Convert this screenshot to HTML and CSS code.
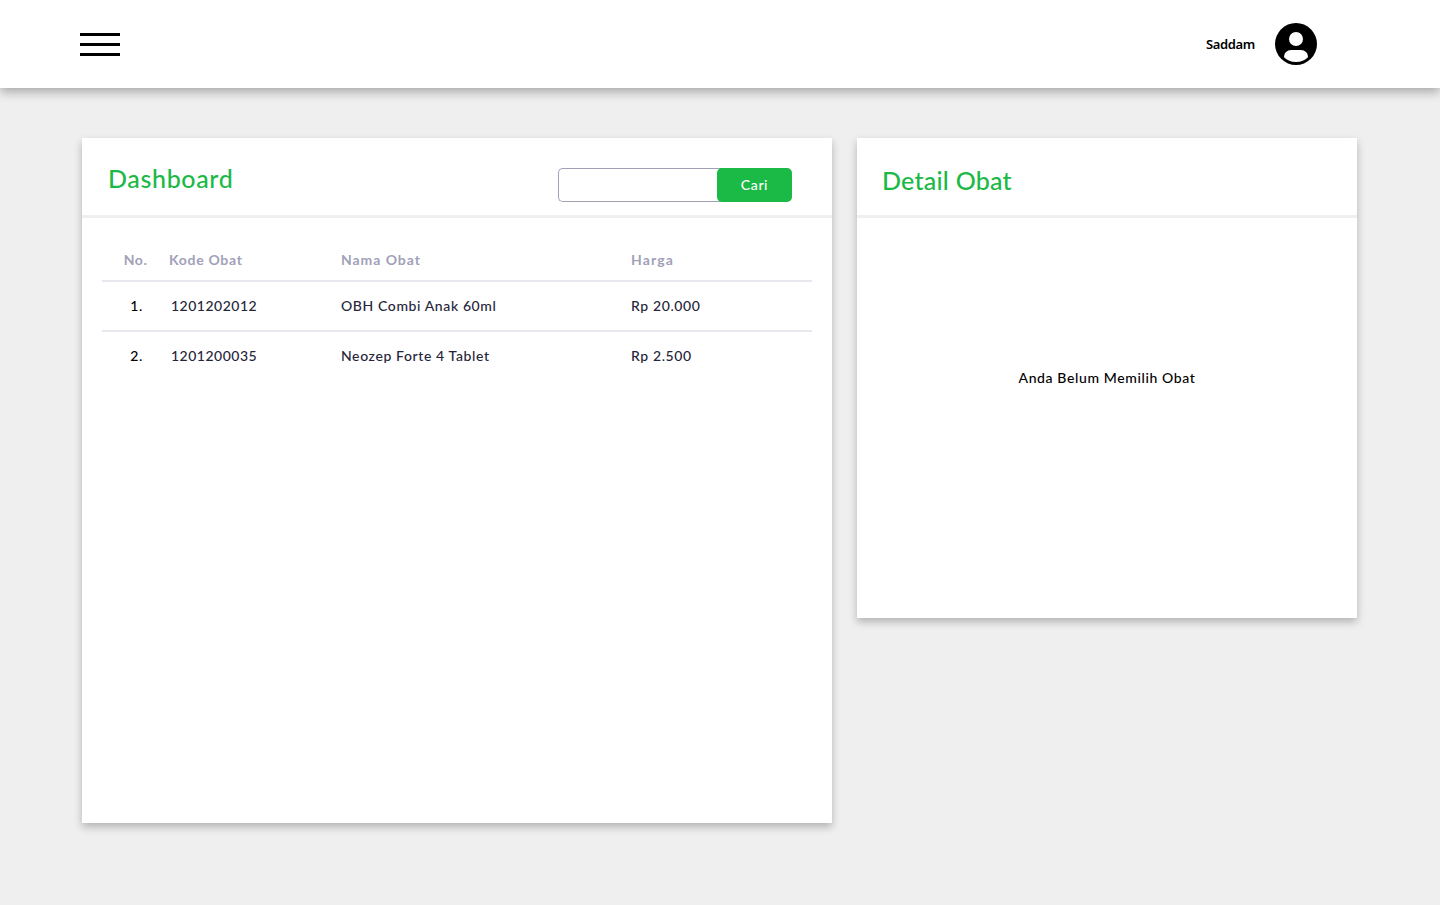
FILE: index.html
```html
<!DOCTYPE html>
<html lang="id">
<head>
<meta charset="utf-8">
<title>Dashboard</title>
<link rel="stylesheet" href="styles.css">
</head>
<body>
<header class="topbar">
  <button class="menu" aria-label="Menu"><span class="bar"></span><span class="bar"></span><span class="bar"></span></button>
  <div class="user">
    <span class="user-name">Saddam</span>
    <svg class="avatar" viewBox="0 0 42 42"><circle cx="21" cy="21" r="21" fill="#000"/><circle cx="21" cy="16" r="7" fill="#fff"/><path d="M9 34.3C9 30 12.200 27 16 27h10c3.800 0 7 3 7 7.300C30 37.300 26 39 21 39S12 37.300 9 34.300z" fill="#fff"/></svg>
  </div>
</header>
<main class="content">
  <section class="card card-list">
    <div class="card-head">
      <h1 class="title title-list">Dashboard</h1>
      <form class="search"><input class="search-input" type="text" aria-label="Cari obat"><button class="search-btn" type="button">Cari</button></form>
    </div>
    <div class="table">
      <div class="row row-head"><span class="no">No.</span><span class="head-code">Kode Obat</span><span class="head-name">Nama Obat</span><span class="head-price">Harga</span></div>
      <div class="row"><span class="no">1.</span><span class="code">1201202012</span><span class="name">OBH Combi Anak 60ml</span><span class="price">Rp 20.000</span></div>
      <div class="row"><span class="no">2.</span><span class="code">1201200035</span><span class="name">Neozep Forte 4 Tablet</span><span class="price">Rp 2.500</span></div>
    </div>
  </section>
  <section class="card card-detail">
    <div class="card-head"><h2 class="title title-detail">Detail Obat</h2></div>
    <p class="empty">Anda Belum Memilih Obat</p>
  </section>
</main>
</body>
</html>
```
FILE: styles.css
```css
* { box-sizing: border-box; }
body {
  margin: 0;
  min-height: 905px;
  background: #efefef;
  font-family: Lato, "Open Sans", sans-serif;
  font-size: 14px;
  font-weight: 500;
  color: #000;
}
.topbar {
  height: 88px;
  padding: 0 123px 0 80px;
  display: flex;
  align-items: center;
  justify-content: space-between;
  background: #fff;
  box-shadow: 0 4px 10px rgba(0, 0, 0, .3);
}
.menu {
  display: flex;
  flex-direction: column;
  gap: 7px;
  width: 40px;
  padding: 0;
  border: 0;
  background: none;
}
.bar { display: block; width: 40px; height: 3px; background: #000; }
.user { display: flex; align-items: center; gap: 20px; }
.user-name {
  font-family: "Noto Sans", sans-serif;
  font-size: 13px;
  font-weight: 600;
  line-height: 18px;
  letter-spacing: -.35px;
}
.avatar { display: block; width: 42px; height: 42px; }
.content {
  display: flex;
  align-items: flex-start;
  gap: 25px;
  padding: 50px 82px 0;
}
.card { background: #fff; box-shadow: 0 4px 8px rgba(0, 0, 0, .25); }
.card-list { width: 750px; height: 685px; }
.card-detail { width: 500px; height: 480px; }
.card-head {
  display: flex;
  justify-content: space-between;
  align-items: flex-start;
  height: 80px;
  border-bottom: 3px solid #efefef;
}
.title {
  margin: 0;
  font-size: 25px;
  font-weight: 500;
  line-height: 32px;
  letter-spacing: .3px;
  color: #1bb946;
}
.title-list { padding: 24px 0 0 26px; letter-spacing: .65px; }
.title-detail { padding: 26px 0 0 25px; letter-spacing: .25px; }
.search { display: flex; margin: 30px 40px 0 0; }
.search-input {
  width: 164px;
  height: 34px;
  border: 1px solid #a1a1b5;
  border-right: 0;
  border-radius: 5px 0 0 5px;
  outline: 0;
}
.search-btn {
  width: 75px;
  height: 34px;
  margin-left: -5px;
  padding: 0 0 2px;
  border: 0;
  border-radius: 5px;
  background: #1bb946;
  color: #fff;
  font: inherit;
  letter-spacing: .6px;
}
.table { padding: 22px 20px 0; }
.row {
  display: grid;
  grid-template-columns: 67px 172px 290px 1fr;
  align-items: center;
  height: 50px;
  padding-bottom: 2px;
  border-top: 2px solid #e7e7ee;
  color: #25253a;
  letter-spacing: .5px;
}
.row-head {
  height: 40px;
  border-top: 0;
  color: #a1a1b8;
  font-weight: 700;
}
.head-code { letter-spacing: .7px; }
.head-name { letter-spacing: .95px; }
.head-price { letter-spacing: 1.1px; }
.name, .price { letter-spacing: .61px; }
.no { width: 67px; text-align: center; }
.row:not(.row-head) .no { color: #000; padding-left: 2px; }
.code { padding-left: 2px; }
.empty {
  margin: 150px 0 0;
  line-height: 20px;
  text-align: center;
  letter-spacing: .62px;
}
```
